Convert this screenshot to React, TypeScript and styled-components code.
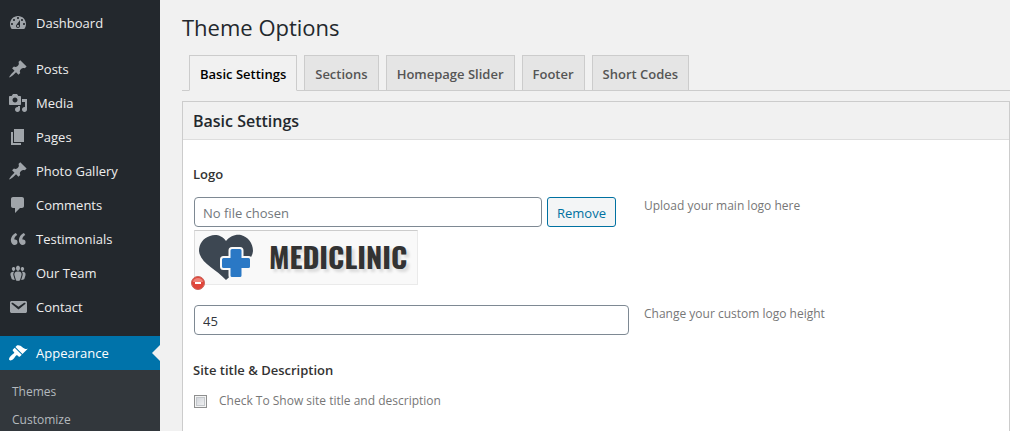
import React from "react";
import styled, { createGlobalStyle } from "styled-components";

const GlobalStyle = createGlobalStyle`
  *, *::before, *::after { box-sizing: border-box; }
  body {
    margin: 0;
    background: #f1f1f1;
    color: #444;
    font-family: "Segoe UI", "Open Sans", "Noto Sans", sans-serif;
    font-size: 13px;
    line-height: 20px;
  }
`;

const Page = styled.div`
  display: flex;
  min-height: 100vh;
`;

const Sidebar = styled.nav`
  flex: 0 0 160px;
  background: #23282d;
  padding-top: 6px;
`;

const MenuGroup = styled.ul`
  list-style: none;
  margin: 0;
  padding: 0 0 12px;

  &:last-child {
    padding-bottom: 0;
  }
`;

const MenuLink = styled.a<{ $active?: boolean }>`
  position: relative;
  display: flex;
  align-items: center;
  gap: 8px;
  height: 34px;
  padding: 0 8px;
  color: ${(p) => (p.$active ? "#fff" : "#eee")};
  background: ${(p) => (p.$active ? "#0073aa" : "transparent")};
  text-decoration: none;

  svg {
    flex: none;
    fill: ${(p) => (p.$active ? "#fff" : "#a0a5aa")};
  }

  &::after {
    content: "";
    display: ${(p) => (p.$active ? "block" : "none")};
    position: absolute;
    right: 0;
    top: 9px;
    border: 8px solid transparent;
    border-left-width: 0;
    border-right-color: #f1f1f1;
  }
`;

const SubMenu = styled.ul`
  list-style: none;
  margin: 0;
  padding: 8px 12px 0;
  background: #32373c;
`;

const SubLink = styled.a`
  display: block;
  line-height: 28px;
  font-size: 12px;
  color: #b4b9be;
  text-decoration: none;
`;

const Main = styled.main`
  flex: 1;
  min-width: 0;
  display: flex;
  flex-direction: column;
  padding: 11px 0 0 22px;
`;

const Title = styled.h1`
  margin: 0 0 12px;
  font-size: 22px;
  line-height: 32px;
  font-weight: 400;
  color: #23282d;
`;

const Tabs = styled.div`
  display: flex;
  gap: 7px;
  padding-left: 7px;
  border-bottom: 1px solid #ccc;
`;

const Tab = styled.button<{ $active?: boolean }>`
  height: 36px;
  margin-bottom: -1px;
  padding: 2px 10px 0;
  border: 1px solid #ccc;
  border-bottom-color: ${(p) => (p.$active ? "#f1f1f1" : "#ccc")};
  background: ${(p) => (p.$active ? "#f1f1f1" : "#e5e5e5")};
  color: ${(p) => (p.$active ? "#000" : "#555")};
  font: inherit;
  font-weight: 600;
  white-space: nowrap;
`;

const Panel = styled.section`
  flex: 1;
  margin-top: 10px;
  border: 1px solid #ccc;
  border-bottom: 0;
  background: #fff;
`;

const PanelTitle = styled.h2`
  margin: 0;
  padding: 1px 10px 0;
  font-size: 16px;
  line-height: 36px;
  font-weight: 600;
  color: #23282d;
  background: #f1f1f1;
  border-bottom: 1px solid #ddd;
`;

const Form = styled.form`
  padding: 24px 10px 0;
`;

const FieldLabel = styled.label`
  display: block;
  font-weight: 600;
  color: #333;
`;

const FieldRow = styled.div`
  display: grid;
  grid-template-columns: 436px 1fr;
  column-gap: 15px;
  margin: 13px 0 20px;

  & + & {
    margin: 0 0 25px;
  }
`;

const Control = styled.div`
  padding-left: 1px;
`;

const Upload = styled.div`
  display: flex;
  gap: 5px;
  padding-right: 13px;
  margin-bottom: 3px;
`;

const TextInput = styled.input`
  display: block;
  width: 100%;
  min-width: 0;
  height: 30px;
  padding: 2px 8px 0;
  border: 1px solid #7e8993;
  border-radius: 4px;
  background: #fff;
  color: #32373c;
  font: inherit;

  &::placeholder {
    color: #72777c;
    opacity: 1;
  }
`;

const RemoveButton = styled.button`
  flex: none;
  height: 30px;
  padding: 2px 9px 0;
  border: 1px solid #0071a1;
  border-radius: 3px;
  background: #f3f5f6;
  color: #0071a1;
  font: inherit;
`;

const Hint = styled.p`
  margin: 0;
  font-size: 12px;
  line-height: 18px;
  color: #777;
`;

const Preview = styled.div`
  position: relative;
  display: flex;
  align-items: center;
  width: 224px;
  height: 55px;
  padding-left: 4px;
  gap: 14px;
  border: 1px solid #eaeaea;
  border-top-color: #ccc;
  border-left-color: #ddd;
  background: #f9f9f9;
`;

const Wordmark = styled.span`
  font-family: "Oswald", "Roboto Condensed", "Liberation Sans Narrow", "Arial Narrow", sans-serif;
  font-size: 29px;
  line-height: 36px;
  padding-bottom: 4px;
  font-weight: 700;
  color: #333;
  text-shadow: 3px 3px 3px rgba(0, 0, 0, 0.12);
`;

const DeleteButton = styled.button`
  position: absolute;
  left: -4px;
  bottom: -6px;
  width: 14px;
  height: 14px;
  padding: 0;
  border: 0;
  background: none;

  svg {
    display: block;
  }
`;

const CheckRow = styled.div`
  display: flex;
  align-items: center;
  gap: 12px;
  margin-top: 11px;
  padding-left: 1px;
  font-size: 12px;
  color: #777;
`;

const Checkbox = styled.input`
  appearance: none;
  width: 13px;
  height: 13px;
  margin: 0;
  border: 1px solid #8e8f8f;
  background: linear-gradient(135deg, #cbcfd5, #f6f6f6);
  box-shadow: inset 0 0 0 1px #f4f4f4, inset 0 0 0 2px #c4c8cc;

  &:checked {
    background: #0073aa;
  }
`;

const icons = {
  dashboard:
    "M3.76 16h12.48c1.1-1.37 1.76-3.11 1.76-5 0-4.42-3.58-8-8-8s-8 3.58-8 8c0 1.89.66 3.63 1.76 5zM10 4c.55 0 1 .45 1 1s-.45 1-1 1-1-.45-1-1 .45-1 1-1zM6 6c.55 0 1 .45 1 1s-.45 1-1 1-1-.45-1-1 .45-1 1-1zm8 0c.55 0 1 .45 1 1s-.45 1-1 1-1-.45-1-1 .45-1 1-1zm-5.37 5.55L12 7v6c0 1.1-.9 2-2 2s-2-.9-2-2c0-.57.24-1.08.63-1.45zM4 10c.55 0 1 .45 1 1s-.45 1-1 1-1-.45-1-1 .45-1 1-1zm12 0c.55 0 1 .45 1 1s-.45 1-1 1-1-.45-1-1 .45-1 1-1zm-5 3c0-.55-.45-1-1-1s-1 .45-1 1 .45 1 1 1 1-.45 1-1z",
  pin: "M10.44 3.02l1.82-1.82 6.36 6.35-1.83 1.82c-1.05-.68-2.48-.57-3.41.36l-.75.75c-.92.93-1.04 2.35-.35 3.41l-1.83 1.82-2.41-2.41-2.8 2.79c-.42.42-3.38 2.71-3.8 2.29s1.86-3.39 2.28-3.81l2.79-2.79L4.1 9.36l1.83-1.82c1.05.69 2.48.57 3.4-.36l.75-.75c.93-.92 1.05-2.35.36-3.41z",
  media:
    "M13 11V4c0-.55-.45-1-1-1h-1.67L9 1H5L3.67 3H2c-.55 0-1 .45-1 1v7c0 .55.45 1 1 1h10c.55 0 1-.45 1-1zM7 4.5c1.38 0 2.5 1.12 2.5 2.5S8.38 9.5 7 9.5 4.5 8.38 4.5 7 5.62 4.5 7 4.5zM14 6h5v10.5c0 1.38-1.12 2.5-2.5 2.5S14 17.88 14 16.5s1.12-2.5 2.5-2.5c.17 0 .34.02.5.05V9h-3V6zm-4 8.05V13h2v3.5c0 1.38-1.12 2.5-2.5 2.5S7 17.88 7 16.5 8.12 14 9.5 14c.17 0 .34.02.5.05z",
  page: "M6 15V2h10v13H6zm-1 1h8v2H3V5h2v11z",
  comment:
    "M5 2h9c1.1 0 2 .9 2 2v7c0 1.1-.9 2-2 2h-2l-5 5v-5H5c-1.1 0-2-.9-2-2V4c0-1.1.9-2 2-2z",
  quote:
    "M9.49 13.22c0-.74-.2-1.38-.61-1.9-.62-.78-1.83-.88-2.53-.72-.29-1.65 1.11-3.75 2.92-4.65L7.88 4c-2.73 1.3-5.42 4.28-4.96 8.05C3.21 14.43 4.59 16 6.54 16c.85 0 1.56-.25 2.12-.75s.83-1.18.83-2.03zm8.05 0c0-.74-.2-1.38-.61-1.9-.63-.78-1.83-.88-2.53-.72-.29-1.65 1.11-3.75 2.92-4.65L15.93 4c-2.73 1.3-5.41 4.28-4.95 8.05.29 2.38 1.66 3.95 3.61 3.95.85 0 1.56-.25 2.12-.75s.83-1.18.83-2.03z",
  team: "M8.03 4.46c-.29 1.28.55 3.46 1.97 3.46 1.41 0 2.25-2.18 1.96-3.46-.22-.98-1.08-1.63-1.96-1.63-.89 0-1.74.65-1.97 1.63zm-4.13.9c-.25 1.08.47 2.93 1.67 2.93s1.92-1.85 1.67-2.93c-.19-.83-.92-1.39-1.67-1.39s-1.48.56-1.67 1.39zm8.86 0c-.25 1.08.47 2.93 1.66 2.93 1.2 0 1.92-1.85 1.67-2.93-.19-.83-.92-1.39-1.67-1.39-.74 0-1.47.56-1.66 1.39zM12.17 16.79l1.25-4.3C14.2 10 12.71 8.47 10 8.47c-2.72 0-4.21 1.53-3.44 4.02l1.26 4.3C8.05 17.51 9 18 10 18c.98 0 1.94-.49 2.17-1.21zM6 8.9c-2.6-.3-4.1 1.2-3.5 3.3l1.1 3.6c.3.8 1.5 1.2 3.2 1.1l-1.3-4.3c-.4-1.5-.2-2.7.5-3.7zM14 8.9c2.6-.3 4.1 1.2 3.5 3.3l-1.1 3.6c-.3.8-1.5 1.2-3.2 1.1l1.3-4.3c.4-1.5.2-2.7-.5-3.7z",
  email:
    "M3.87 4h13.25C18.37 4 19 4.59 19 5.79v8.42c0 1.19-.63 1.79-1.88 1.79H3.87c-1.25 0-1.88-.6-1.88-1.79V5.79c0-1.2.63-1.79 1.88-1.79zm6.62 8.6l6.74-5.53c.24-.2.43-.66.13-1.07-.29-.41-.82-.42-1.17-.17l-5.7 3.86L4.8 5.83c-.35-.25-.88-.24-1.17.17-.3.41-.11.87.13 1.07z",
  brush:
    "M14.48 11.06L7.41 3.99l1.5-1.5c.5-.56 2.3-.47 3.51.32 1.21.8 1.43 1.28 2.91 2.1 1.18.64 2.45 1.26 4.45.85zm-.71.71L6.7 4.7 4.93 6.47c-.39.39-.39 1.02 0 1.41l1.06 1.06c.39.39.39 1.03 0 1.42-.6.6-1.43 1.11-2.21 1.69-.35.26-.7.53-1.01.84C1.43 14.23.4 16.08 1.4 17.07c.99 1 2.84-.03 4.18-1.36.31-.31.58-.66.85-1.02.57-.78 1.08-1.61 1.69-2.21.39-.39 1.02-.39 1.41 0l1.06 1.06c.39.39 1.02.39 1.41 0z",
};

type IconName = keyof typeof icons;

const MenuItem = ({ icon, label, active }: { icon: IconName; label: string; active?: boolean }) => (
  <li>
    <MenuLink href="#" $active={active} aria-current={active ? "page" : undefined}>
      <svg width="20" height="20" viewBox="0 0 20 20" aria-hidden="true">
        <path d={icons[icon]} />
      </svg>
      {label}
    </MenuLink>
  </li>
);

const contentItems: { icon: IconName; label: string }[] = [
  { icon: "pin", label: "Posts" },
  { icon: "media", label: "Media" },
  { icon: "page", label: "Pages" },
  { icon: "pin", label: "Photo Gallery" },
  { icon: "comment", label: "Comments" },
  { icon: "quote", label: "Testimonials" },
  { icon: "team", label: "Our Team" },
  { icon: "email", label: "Contact" },
];

const tabs = ["Basic Settings", "Sections", "Homepage Slider", "Footer", "Short Codes"];

const HeartLogo = () => (
  <svg width="56" height="48" viewBox="0 0 56 48" aria-hidden="true">
    <path
      d="M27 7C23 1 16 0 11 2C4 4 0 10 0 17C1 29 17 35 27 46C38 35 53 29 54 17C54 9 49 3 42 1C36 0 30 3 27 7Z"
      fill="#3d4752"
    />
    <path
      d="M33 15h8q1.500 0 1.500 1.500v7.500h7q1.500 0 1.500 1.500v7q0 1.500-1.500 1.500h-7v7.500q0 1.500-1.500 1.500h-8q-1.500 0-1.500-1.500v-7.500h-7q-1.500 0-1.500-1.500v-7q0-1.500 1.500-1.500h7v-7.500q0-1.500 1.500-1.500z"
      fill="#2a78c5"
      stroke="#f9f9f9"
      strokeWidth="4"
      strokeLinejoin="round"
      paintOrder="stroke"
    />
  </svg>
);

export default function App() {
  return (
    <>
      <GlobalStyle />
      <Page>
        <Sidebar aria-label="Main menu">
          <MenuGroup>
            <MenuItem icon="dashboard" label="Dashboard" />
          </MenuGroup>
          <MenuGroup>
            {contentItems.map((item) => (
              <MenuItem key={item.label} {...item} />
            ))}
          </MenuGroup>
          <MenuGroup>
            <MenuItem icon="brush" label="Appearance" active />
            <li>
              <SubMenu>
                <li><SubLink href="#">Themes</SubLink></li>
                <li><SubLink href="#">Customize</SubLink></li>
              </SubMenu>
            </li>
          </MenuGroup>
        </Sidebar>
        <Main>
          <Title>Theme Options</Title>
          <Tabs role="tablist">
            {tabs.map((tab, i) => (
              <Tab key={tab} type="button" role="tab" aria-selected={i === 0} $active={i === 0}>
                {tab}
              </Tab>
            ))}
          </Tabs>
          <Panel>
            <PanelTitle>Basic Settings</PanelTitle>
            <Form>
              <FieldLabel htmlFor="logo-file">Logo</FieldLabel>
              <FieldRow>
                <Control>
                  <Upload>
                    <TextInput id="logo-file" type="text" placeholder="No file chosen" />
                    <RemoveButton type="button">Remove</RemoveButton>
                  </Upload>
                  <Preview>
                    <HeartLogo />
                    <Wordmark>MEDICLINIC</Wordmark>
                    <DeleteButton type="button" aria-label="Delete logo">
                      <svg width="14" height="14" viewBox="0 0 14 14" aria-hidden="true">
                        <circle cx="7" cy="7" r="6.5" fill="#e0453a" stroke="#c9655c" />
                        <path d="M2 6a5 4 0 0 1 10 0z" fill="#ee8278" />
                        <rect x="4" y="6" width="6" height="2" fill="#fff" />
                      </svg>
                    </DeleteButton>
                  </Preview>
                </Control>
                <Hint>Upload your main logo here</Hint>
              </FieldRow>
              <FieldRow>
                <Control>
                  <TextInput type="text" defaultValue="45" aria-label="Custom logo height" />
                </Control>
                <Hint>Change your custom logo height</Hint>
              </FieldRow>
              <FieldLabel as="div">Site title &amp; Description</FieldLabel>
              <CheckRow>
                <Checkbox id="show-title" type="checkbox" />
                <label htmlFor="show-title">Check To Show site title and description</label>
              </CheckRow>
            </Form>
          </Panel>
        </Main>
      </Page>
    </>
  );
}
